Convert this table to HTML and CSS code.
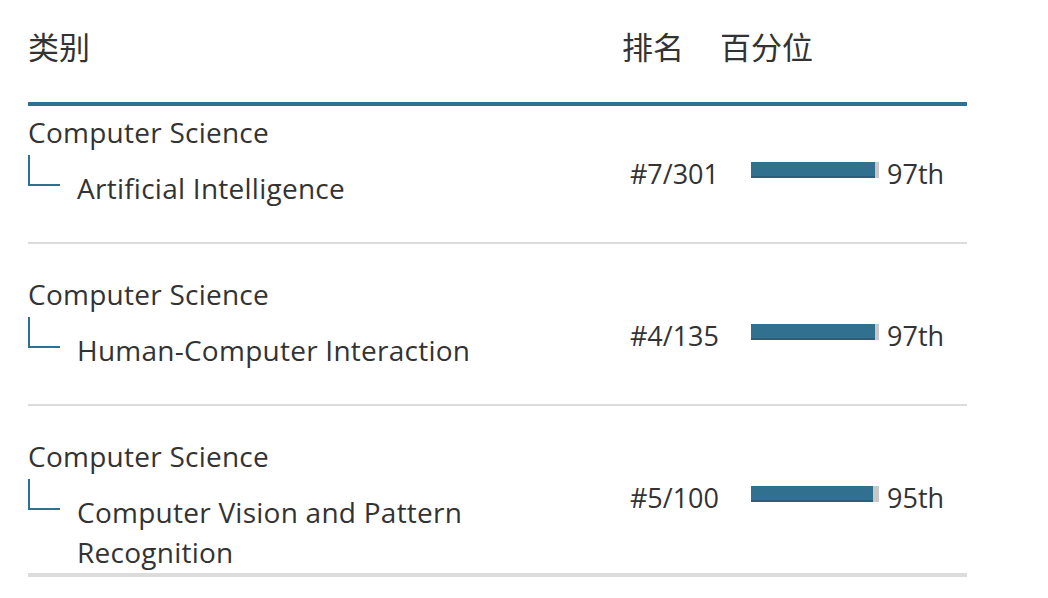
FILE: index.html
```html
<!DOCTYPE html>
<html lang="zh">
<head>
<meta charset="utf-8">
<link rel="stylesheet" href="styles.css">
</head>
<body>
<div class="table">
  <div class="head">
    <div class="col-cat">类别</div>
    <div class="col-rank">排名</div>
    <div class="col-pct">百分位</div>
  </div>
  <div class="row">
    <div class="col-cat">
      <div class="parent">Computer Science</div>
      <div class="child"><span class="conn"></span><span class="child-text">Artificial Intelligence</span></div>
    </div>
    <div class="col-rank rank">#7/301</div>
    <div class="col-pct pct">
      <div class="bar"><div class="fill" style="width:97%"></div></div>
      <span class="pct-text">97th</span>
    </div>
  </div>
  <div class="row">
    <div class="col-cat">
      <div class="parent">Computer Science</div>
      <div class="child"><span class="conn"></span><span class="child-text">Human-Computer Interaction</span></div>
    </div>
    <div class="col-rank rank">#4/135</div>
    <div class="col-pct pct">
      <div class="bar"><div class="fill" style="width:97%"></div></div>
      <span class="pct-text">97th</span>
    </div>
  </div>
  <div class="row">
    <div class="col-cat">
      <div class="parent">Computer Science</div>
      <div class="child"><span class="conn"></span><span class="child-text">Computer Vision and Pattern Recognition</span></div>
    </div>
    <div class="col-rank rank">#5/100</div>
    <div class="col-pct pct">
      <div class="bar"><div class="fill" style="width:95%"></div></div>
      <span class="pct-text">95th</span>
    </div>
  </div>
</div>
</body>
</html>
```
FILE: styles.css
```css
html, body {
  margin: 0;
  padding: 0;
  background: #fff;
}
body {
  font-family: "Open Sans", "Noto Sans CJK SC", sans-serif;
  color: #333;
  font-size: 28px;
  line-height: 40px;
}
.table {
  width: 939px;
  margin-left: 28px;
}
.head {
  display: flex;
  font-family: "Noto Sans CJK SC", sans-serif;
  font-size: 31px;
  line-height: 45px;
  padding: 23px 0 34px;
  border-bottom: 4px solid #2f6f91;
}
.col-cat {
  flex: 1;
  min-width: 0;
  letter-spacing: 0.25px;
}
.head .col-cat {
  letter-spacing: 0;
}
.col-rank {
  width: 98px;
}
.col-pct {
  width: 247px;
}
.row {
  display: flex;
  padding: 30px 0 34px;
  border-bottom: 2px solid #dcdcdc;
}
.head + .row {
  padding-top: 6px;
}
.row:last-child {
  padding-bottom: 1px;
  border-bottom-width: 4px;
}
.child {
  display: flex;
  align-items: flex-start;
  margin-top: 3px;
}
.conn {
  flex: none;
  width: 30px;
  height: 29px;
  border-left: 2px solid #2f6f91;
  border-bottom: 2px solid #2f6f91;
  margin-right: 17px;
}
.child-text {
  padding-top: 13px;
  max-width: 420px;
}
.rank,
.pct {
  font-size: 27px;
  margin-top: 42px;
}
.rank {
  text-align: right;
  padding-right: 1px;
  box-sizing: border-box;
}
.pct {
  display: flex;
  align-items: flex-start;
  padding-left: 31px;
  box-sizing: border-box;
}
.bar {
  width: 128px;
  height: 16px;
  margin-top: 8px;
  background: #c8c8c8;
  flex: none;
}
.fill {
  height: 100%;
  background: #31708f;
  box-shadow: inset 0 -2px 0 #2a5f7c;
}
.pct-text {
  margin-left: 8px;
}
```
